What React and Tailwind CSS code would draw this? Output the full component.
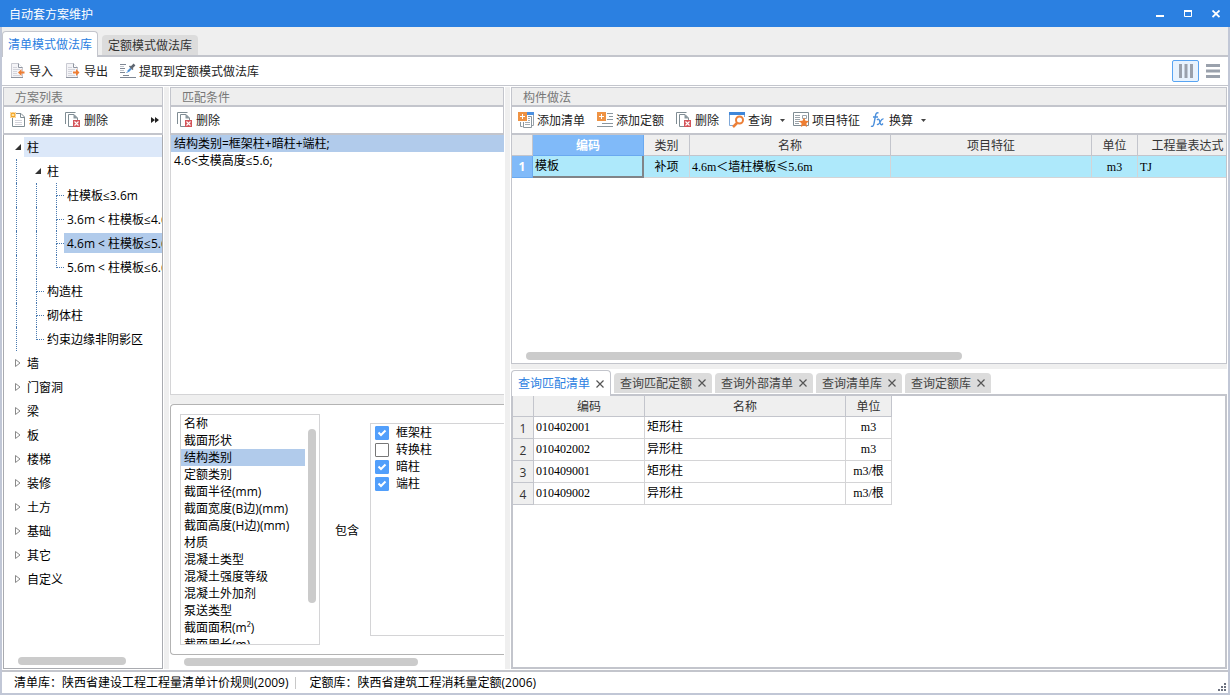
// App.jsx
import { useState } from "react";

const TREE = [
  { label: "柱", depth: 0, open: true, hover: true },
  { label: "柱", depth: 1, open: true },
  { label: "柱模板≤3.6m", depth: 2, leaf: true },
  { label: "3.6m < 柱模板≤4.6m", depth: 2, leaf: true },
  { label: "4.6m < 柱模板≤5.6m", depth: 2, leaf: true, selected: true },
  { label: "5.6m < 柱模板≤6.6m", depth: 2, leaf: true, last: true },
  { label: "构造柱", depth: 1, leaf: true },
  { label: "砌体柱", depth: 1, leaf: true },
  { label: "约束边缘非阴影区", depth: 1, leaf: true, last: true },
  { label: "墙", depth: 0 },
  { label: "门窗洞", depth: 0 },
  { label: "梁", depth: 0 },
  { label: "板", depth: 0 },
  { label: "楼梯", depth: 0 },
  { label: "装修", depth: 0 },
  { label: "土方", depth: 0 },
  { label: "基础", depth: 0 },
  { label: "其它", depth: 0 },
  { label: "自定义", depth: 0 },
];

const CONDITIONS = ["结构类别=框架柱+暗柱+端柱;", "4.6<支模高度≤5.6;"];

const ATTRIBUTES = [
  "名称",
  "截面形状",
  "结构类别",
  "定额类别",
  "截面半径(mm)",
  "截面宽度(B边)(mm)",
  "截面高度(H边)(mm)",
  "材质",
  "混凝土类型",
  "混凝土强度等级",
  "混凝土外加剂",
  "泵送类型",
  "截面面积(m²)",
  "截面周长(m)",
];

const COLUMN_TYPES = ["框架柱", "转换柱", "暗柱", "端柱"];

const QUERY_TABS = ["查询匹配清单", "查询匹配定额", "查询外部清单", "查询清单库", "查询定额库"];

const BILL_ROWS = [
  ["010402001", "矩形柱", "m3"],
  ["010402002", "异形柱", "m3"],
  ["010409001", "矩形柱", "m3/根"],
  ["010409002", "异形柱", "m3/根"],
];

/* ---------- icons ---------- */

function Icon({ children }) {
  return (
    <svg width="16" height="16" viewBox="0 0 16 16" fill="none" className="shrink-0" aria-hidden="true">
      {children}
    </svg>
  );
}

function DocArrow({ out = false }) {
  return (
    <Icon>
      <path d="M1.5.5h7l4 4v10h-11z" fill="#f4f4f7" stroke="#c9cad2" />
      <path d="M8.5.5v4h4" fill="#fff" stroke="#8f95a0" />
      <path d="M3 4.5h4M3 6.5h7M3 8.5h4M3 10.5h4M3 12.5h7" stroke="#d3d4db" />
      <path d="M1 14.5h12" stroke="#8f95a0" />
      {out ? (
        <path d="M14.5 9.5 11 6v2.500H8v2h3V13z" fill="#ee7d32" />
      ) : (
        <path d="M8 9.5 11.500 6v2.500h3v2h-3V13z" fill="#ee7d32" />
      )}
    </Icon>
  );
}

function ExtractIcon() {
  return (
    <Icon>
      <path d="M0 1.500h6M0 5.500h5M0 9.500h5M0 14.500h16M3 12.500h6" stroke="#7f8794" />
      <path d="M0 3.500h4M0 7.500h4" stroke="#c4c8cf" />
      <path d="M8 8.500 11 5.500" stroke="#4a90d9" strokeWidth="2" />
      <path d="M6.500 10 8.500 8" stroke="#4a90d9" />
      <path d="M9.500 3 13 6.500" stroke="#5d656f" strokeWidth="1.500" />
      <path d="M11.500 4.500 14.500 1.500" stroke="#5d656f" strokeWidth="2.500" />
    </Icon>
  );
}

function NewIcon() {
  return (
    <Icon>
      <path d="M6 1.500h5l3.500 3.500v9.500h-12V6" fill="#fff" stroke="#7f8c93" />
      <path d="M10.500 1.500v4h4" stroke="#7f8c93" />
      <path d="M5 8.500h7M5 10.500h7M5 12.500h7" stroke="#d3d3da" />
      <path d="M.500.500l5 5M5.500.500l-5 5M3 0v6M0 3h6" stroke="#f5a623" strokeWidth="1.100" />
      <circle cx="3" cy="3" r="1" fill="#fff3cf" />
    </Icon>
  );
}

function DeleteIcon() {
  return (
    <Icon>
      <path d="M.500 12V.500h10" stroke="#7f8c93" />
      <path d="M8 14.500H3.500v-12H9l3.500 3.500v2.500" fill="#fff" stroke="#7f8c93" />
      <path d="M8.500 2v4.500H13z" fill="#8b979e" />
      <rect x="8" y="8" width="7" height="7" fill="#d4545a" />
      <path d="m9.500 9.500 4 4m0-4-4 4" stroke="#fff" strokeWidth="1.100" />
    </Icon>
  );
}

function AddListIcon() {
  return (
    <Icon>
      <path d="M15.500 1v12.500h-2" stroke="#9aa3aa" />
      <path d="M9 1.500h7" stroke="#4b90e0" strokeWidth="3" />
      <path d="M2.500 10v4.500h2M5.500 10v5.500h8V4.500H10" stroke="#8b979e" />
      <path d="M10 6.500h2M10 8.500h2M7 10.500h5M7 12.500h5" stroke="#a5adb3" />
      <rect width="9" height="9" fill="#ef9344" />
      <path d="M4.500 2v5M2 4.500h5" stroke="#fff" />
    </Icon>
  );
}

function AddQuotaIcon() {
  return (
    <Icon>
      <path d="M10 1.500h6M12 4.500h4M10 7.500h6M5 11.500h11M0 14.500h16" stroke="#8b979e" />
      <rect width="9" height="9" fill="#ef9344" />
      <path d="M4.500 2v5M2 4.500h5" stroke="#fff" />
    </Icon>
  );
}

function QueryIcon() {
  return (
    <Icon>
      <path d="M.500 3v10.500H4M15.500 3v2" stroke="#7fa8d8" />
      <path d="M0 1.500h16" stroke="#3f86d8" strokeWidth="3" />
      <circle cx="10.500" cy="8" r="3.500" fill="#fff" stroke="#ec7f37" strokeWidth="2" />
      <path d="m8 11-4 4" stroke="#ec7f37" strokeWidth="2.500" />
    </Icon>
  );
}

function FeatureIcon() {
  return (
    <Icon>
      <path d="M.500.500h15v13H.500z" fill="#fff" stroke="#7f8c93" />
      <path d="M2 3.500h5M2 5.500h5M2 7.500h5M2 9.500h5M2 11.500h4" stroke="#9aa3aa" />
      <path d="M9.500 3.500h4v3h-4z" stroke="#9aa3aa" />
      <path d="m11 5.500 1.500 3.200 3.500.4-2.600 2.300.7 3.600-3.100-1.800L7.900 15l.7-3.600L6 9.100l3.500-.4z" fill="#ee7d32" />
    </Icon>
  );
}

function FxIcon() {
  return (
    <Icon>
      <path
        d="M8.500 1.200C7 .2 6 1.200 5.600 3.200L4 11.500C3.600 14 2.600 15 1 14M3 5h5"
        stroke="#4a8fdc"
        strokeWidth="1.400"
      />
      <path d="M7 8c2-2 2.500 0 3 2.500s1.500 3 3 1M13.500 7c-2-.5-3 2.500-4 4s-1.700 1.800-2.600 1.200" stroke="#4a8fdc" strokeWidth="1.300" />
    </Icon>
  );
}

function CloseMark() {
  return (
    <svg width="8" height="8" viewBox="0 0 8 8" aria-hidden="true">
      <path d="m.5.5 7 7m0-7-7 7" stroke="#555" strokeWidth="1.200" />
    </svg>
  );
}

function Caret() {
  return (
    <svg width="5" height="3" viewBox="0 0 5 3" className="ml-[5px]" aria-hidden="true">
      <path d="M0 0h5L2.500 3z" fill="#444" />
    </svg>
  );
}

/* ---------- shared pieces ---------- */

function ToolButton({ icon, label, menu = false }) {
  return (
    <button
      type="button"
      className={`flex h-[22px] shrink-0 items-center gap-[3px] rounded-sm text-[#222] hover:bg-[#eaf3fe] ${
        menu ? "pl-1 pr-px" : "pl-1.5 pr-[5px]"
      }`}
    >
      {icon}
      <span className="pt-0.5">{label}</span>
      {menu && <Caret />}
    </button>
  );
}

function PanelTitle({ children }) {
  return (
    <h2 className="h-5 shrink-0 border border-b-2 border-[#c3c5cc] bg-[#eeeeee] pl-[11px] leading-5 text-[#777]">
      {children}
    </h2>
  );
}

function PanelTools({ children }) {
  return (
    <div className="flex h-[28px] shrink-0 items-center gap-px border-x border-b-2 border-[#c3c5cc] bg-white">
      {children}
    </div>
  );
}

function Gutter() {
  return <div className="mx-px w-[5px] shrink-0 bg-[#efefef]" />;
}

/* ---------- plan tree ---------- */

function TreeMark({ node }) {
  if (node.leaf) {
    return (
      <span className="flex h-6 w-2 shrink-0 flex-col">
        <span className="h-[13px] border-b border-l border-dotted border-[#4a7ab0]" />
        {!node.last && <span className="grow border-l border-dotted border-[#4a7ab0]" />}
      </span>
    );
  }
  return (
    <span className="flex w-2 shrink-0">
      <svg width="6" height="8" viewBox="0 0 6 8" className="-ml-px" overflow="visible" aria-hidden="true">
        {node.open ? (
          <path d="M6 1v6H0z" fill="#333" />
        ) : (
          <path d="M.5.5v7L5 4z" fill="#fff" stroke="#8a8a8a" />
        )}
      </svg>
    </span>
  );
}

function TreeRow({ node }) {
  return (
    <li className="flex h-6 items-center pl-3">
      {Array.from({ length: node.depth }, (_, i) => (
        <span key={i} className="h-6 w-5 shrink-0 border-l border-dotted border-[#4a7ab0]" />
      ))}
      <TreeMark node={node} />
      <button
        type="button"
        className={`h-5 min-w-0 grow overflow-hidden whitespace-nowrap pl-[3px] pt-0.5 text-left leading-[18px] ${
          node.selected ? "bg-[#b1cbeb]" : node.hover ? "bg-[#dce8f9]" : ""
        }`}
      >
        {node.label}
      </button>
    </li>
  );
}

function PlanPanel() {
  return (
    <section className="flex w-40 shrink-0 flex-col">
      <PanelTitle>方案列表</PanelTitle>
      <PanelTools>
        <ToolButton icon={<NewIcon />} label="新建" />
        <ToolButton icon={<DeleteIcon />} label="删除" />
        <button type="button" aria-label="更多" className="ml-auto mr-[3px]">
          <svg width="8" height="6" viewBox="0 0 8 6" aria-hidden="true">
            <path d="M0 0v6l4-3zM4 0v6l4-3z" fill="#222" />
          </svg>
        </button>
      </PanelTools>
      <div className="flex min-h-0 grow flex-col border border-t-0 border-[#a9abb0] bg-white">
        <ul className="min-h-0 grow overflow-hidden">
          {TREE.map((node) => (
            <TreeRow key={`${node.depth}-${node.label}`} node={node} />
          ))}
        </ul>
        <div className="mb-[3px] ml-3.5 h-2 w-[108px] shrink-0 rounded-full bg-[#cbcbcb]" />
      </div>
    </section>
  );
}

/* ---------- match conditions ---------- */

function ConditionPanel() {
  const [attribute, setAttribute] = useState("结构类别");
  const [checked, setChecked] = useState(["框架柱", "暗柱", "端柱"]);

  const toggle = (type) =>
    setChecked((prev) => (prev.includes(type) ? prev.filter((t) => t !== type) : [...prev, type]));

  return (
    <section className="flex w-[334px] shrink-0 flex-col">
      <PanelTitle>匹配条件</PanelTitle>
      <PanelTools>
        <ToolButton icon={<DeleteIcon />} label="删除" />
      </PanelTools>
      <ul className="min-h-0 grow border-b border-l border-[#d4d4d6]">
        {CONDITIONS.map((text, i) => (
          <li key={text} className={`h-[17px] pl-[3px] leading-[17px] ${i === 0 ? "bg-[#b1cbeb]" : ""}`}>
            {text}
          </li>
        ))}
      </ul>
      <div className="h-[9px] shrink-0 bg-[#efefef]" />
      <div className="flex h-[251px] shrink-0 items-center rounded-l-sm border border-r-0 border-[#b3b3b3] pl-[9px]">
        <div className="flex h-[231px] w-[140px] shrink-0 border border-[#d4d4d6]">
          <ul className="w-[124px] overflow-hidden">
            {ATTRIBUTES.map((name) => (
              <li key={name}>
                <button
                  type="button"
                  onClick={() => setAttribute(name)}
                  className={`block h-[17px] w-full whitespace-nowrap pl-[3px] text-left leading-[17px] ${
                    name === attribute ? "bg-[#b1cbeb]" : ""
                  }`}
                >
                  {name}
                </button>
              </li>
            ))}
          </ul>
          <div className="ml-[3px] mt-3.5 h-[174px] w-2 rounded-full bg-[#cbcbcb]" />
        </div>
        <span className="w-[50px] shrink-0 pl-[15px] pt-0.5 whitespace-nowrap">包含</span>
        <div className="h-[213px] grow border border-r-0 border-[#d4d4d6] pl-1">
          {COLUMN_TYPES.map((type) => (
            <label key={type} className="flex h-[17px] items-center gap-[7px]">
              <span className="grid size-3.5">
                <input
                  type="checkbox"
                  checked={checked.includes(type)}
                  onChange={() => toggle(type)}
                  className="col-start-1 row-start-1 size-3.5 appearance-none rounded-[1px] border border-[#777] bg-white peer checked:border-[#529ffb] checked:bg-[#529ffb]"
                />
                <svg
                  viewBox="0 0 14 14"
                  className="pointer-events-none invisible col-start-1 row-start-1 size-3.5 peer-checked:visible"
                  aria-hidden="true"
                >
                  <path d="m3.500 6.500 2.500 2.500 4.500-4.500" fill="none" stroke="#fff" strokeWidth="2" />
                </svg>
              </span>
              {type}
            </label>
          ))}
        </div>
      </div>
      <div className="flex h-3.5 shrink-0 items-center pl-3.5">
        <div className="h-2 w-[234px] rounded-full bg-[#cbcbcb]" />
      </div>
    </section>
  );
}

/* ---------- component practices ---------- */

const HEAD = "h-[21px] border-b border-r border-[#c3c5cc] bg-[#efefef] p-0 pt-0.5 text-center font-normal text-[#333]";
const CELL = "h-[22px] border-b border-r border-[#d4d4d6] p-0 font-['Liberation_Serif','Noto_Sans_CJK_SC',serif] leading-4";

function PracticeTable() {
  return (
    <table className="w-[726px] table-fixed border-separate border-spacing-0 whitespace-nowrap">
      <colgroup>
        <col className="w-[21px]" />
        <col className="w-[111px]" />
        <col className="w-[46px]" />
        <col className="w-[201px]" />
        <col className="w-[201px]" />
        <col className="w-[46px]" />
        <col className="w-[100px]" />
      </colgroup>
      <thead>
        <tr>
          <th className={HEAD} aria-label="序号" />
          <th className="h-[21px] border-b border-r border-[#6aa9f0] bg-[#80baf9] p-0 pt-0.5 text-center font-bold text-white">
            编码
          </th>
          <th className={HEAD}>类别</th>
          <th className={HEAD}>名称</th>
          <th className={HEAD}>项目特征</th>
          <th className={HEAD}>单位</th>
          <th className={HEAD}>工程量表达式</th>
        </tr>
      </thead>
      <tbody className="bg-[#aee9fb]">
        <tr>
          <th className="h-[22px] border-b border-r border-[#6aa9f0] bg-[#80baf9] p-0 text-center font-bold text-white">
            1
          </th>
          <td className="h-[22px] border-b-2 border-r-2 border-[#808488] p-0 pl-0.5 font-['Liberation_Serif','Noto_Sans_CJK_SC',serif] leading-4">
            模板
          </td>
          <td className={`${CELL} text-center`}>补项</td>
          <td className={`${CELL} pl-0.5`}>
            4.6m＜墙柱模板<span className="font-['Noto_Sans_CJK_SC',sans-serif]">≤</span>5.6m
          </td>
          <td className={CELL} />
          <td className={`${CELL} text-center`}>m3</td>
          <td className={`${CELL} pl-0.5`}>TJ</td>
        </tr>
      </tbody>
    </table>
  );
}

function BillTable() {
  return (
    <table className="w-[379px] table-fixed border-separate border-spacing-0 whitespace-nowrap">
      <colgroup>
        <col className="w-[21px]" />
        <col className="w-[111px]" />
        <col className="w-[201px]" />
        <col className="w-[46px]" />
      </colgroup>
      <thead>
        <tr>
          <th className={HEAD} aria-label="序号" />
          <th className={HEAD}>编码</th>
          <th className={HEAD}>名称</th>
          <th className={HEAD}>单位</th>
        </tr>
      </thead>
      <tbody>
        {BILL_ROWS.map(([code, name, unit], i) => (
          <tr key={code}>
            <th className="h-[22px] border-b border-r border-[#c3c5cc] bg-[#efefef] p-0 pt-0.5 text-center font-normal text-[#333]">
              {i + 1}
            </th>
            <td className={`${CELL} pb-0.5 pl-0.5`}>{code}</td>
            <td className={`${CELL} pb-0.5 pl-0.5`}>{name}</td>
            <td className={`${CELL} pb-0.5 text-center`}>{unit}</td>
          </tr>
        ))}
      </tbody>
    </table>
  );
}

function PracticePanel() {
  const [tab, setTab] = useState(QUERY_TABS[0]);

  return (
    <section className="flex min-w-0 grow flex-col">
      <PanelTitle>构件做法</PanelTitle>
      <PanelTools>
        <ToolButton icon={<AddListIcon />} label="添加清单" />
        <ToolButton icon={<AddQuotaIcon />} label="添加定额" />
        <ToolButton icon={<DeleteIcon />} label="删除" />
        <ToolButton icon={<QueryIcon />} label="查询" menu />
        <ToolButton icon={<FeatureIcon />} label="项目特征" />
        <ToolButton icon={<FxIcon />} label="换算" menu />
      </PanelTools>
      <div className="flex h-[229px] shrink-0 flex-col overflow-hidden border border-t-0 border-[#c3c5cc]">
        <PracticeTable />
        <div className="mb-[3px] ml-3.5 mt-auto h-2 w-[436px] rounded-full bg-[#cbcbcb]" />
      </div>
      <div className="h-[5px] shrink-0 bg-[#efefef]" />

      <div className="flex h-[27px] shrink-0 items-end gap-[3px] border-b-2 border-[#c3c5cc]">
        {QUERY_TABS.map((name) => (
          <div
            key={name}
            className={
              name === tab
                ? "-mb-0.5 flex h-[26px] items-center gap-1.5 rounded-t-sm border border-b-0 border-[#c3c5cc] bg-white px-1.5 text-[#2b80e1]"
                : "mb-px flex h-5 items-center gap-1.5 rounded-t-sm bg-[#dcdcdc] px-1.5 text-[#444]"
            }
          >
            <button
              type="button"
              onClick={() => setTab(name)}
              className={name === tab ? "whitespace-nowrap" : "whitespace-nowrap pt-0.5"}
            >
              {name}
            </button>
            <button type="button" aria-label={`关闭${name}`}>
              <CloseMark />
            </button>
          </div>
        ))}
      </div>
      <div className="min-h-0 grow overflow-hidden border-2 border-t-0 border-[#c3c5cc]">
        <BillTable />
      </div>
    </section>
  );
}

/* ---------- window ---------- */

function TitleBar() {
  return (
    <header className="flex h-[27px] shrink-0 items-center justify-between bg-[#2b80e1] pl-[9px] pr-2.5 text-white">
      <h1 className="pt-0.5">自动套方案维护</h1>
      <div className="flex items-center gap-5">
        <button type="button" aria-label="最小化">
          <svg width="8" height="8" viewBox="0 0 8 8" aria-hidden="true">
            <path d="M0 6h8" stroke="#fff" strokeWidth="2" />
          </svg>
        </button>
        <button type="button" aria-label="最大化">
          <svg width="8" height="8" viewBox="0 0 8 8" aria-hidden="true">
            <path d="M.5 1v5.500h7V1" fill="none" stroke="#fff" />
            <path d="M0 1h8" stroke="#fff" strokeWidth="2" />
          </svg>
        </button>
        <button type="button" aria-label="关闭">
          <svg width="8" height="8" viewBox="0 0 8 8" aria-hidden="true">
            <path d="m.5.5 7 6.500m0-6.500-7 6.500" stroke="#fff" strokeWidth="1.800" />
          </svg>
        </button>
      </div>
    </header>
  );
}

function MainToolbar() {
  return (
    <div className="flex h-[29px] shrink-0 items-center gap-px border-b border-[#c3c5cc] bg-white pl-0.5 pr-[3px]">
      <ToolButton icon={<DocArrow />} label="导入" />
      <ToolButton icon={<DocArrow out />} label="导出" />
      <ToolButton icon={<ExtractIcon />} label="提取到定额模式做法库" />
      <button
        type="button"
        aria-label="纵向布局"
        className="ml-auto flex h-[22px] w-[27px] items-center justify-center rounded-xs border border-[#58a4f2] bg-[#e8f3fe]"
      >
        <svg width="14" height="14" viewBox="0 0 14 14" aria-hidden="true">
          <path d="M1.500 0v14M7 0v14M12.500 0v14" stroke="#9aa1ac" strokeWidth="3" />
        </svg>
      </button>
      <button type="button" aria-label="横向布局" className="flex h-[22px] w-[25px] items-center justify-center">
        <svg width="14" height="14" viewBox="0 0 14 14" aria-hidden="true">
          <path d="M0 1.500h14M0 7h14M0 12.500h14" stroke="#9aa1ac" strokeWidth="3" />
        </svg>
      </button>
    </div>
  );
}

export default function App() {
  return (
    <div className="flex h-screen flex-col overflow-hidden bg-white font-['Open_Sans','Noto_Sans_CJK_SC',sans-serif] text-[12px] leading-[18px] text-black">
      <TitleBar />
      <div className="flex min-h-0 grow flex-col border-2 border-t-0 border-[#c1c7d6]">
        <nav className="flex h-[30px] shrink-0 items-end gap-1 border-b-2 border-[#c3c5cc] bg-[#efefef]">
          <button
            type="button"
            className="-mb-0.5 h-[26px] rounded-t-sm border border-b-0 border-[#c3c5cc] bg-white px-[5px] text-[#2b80e1]"
          >
            清单模式做法库
          </button>
          <button type="button" className="h-5 rounded-t-sm bg-[#dcdcdc] px-1.5 pt-0.5 text-[#333]">
            定额模式做法库
          </button>
        </nav>
        <MainToolbar />

        <main className="flex min-h-0 grow px-px py-px">
          <PlanPanel />
          <Gutter />
          <ConditionPanel />
          <Gutter />
          <PracticePanel />
        </main>

        <footer className="flex h-[23px] shrink-0 items-center border-t-2 border-[#c3c5cc] bg-white pl-3">
          <span>清单库：陕西省建设工程工程量清单计价规则(2009)</span>
          <span className="ml-1.5 h-3 border-l border-[#c8c8c8]" />
          <span className="ml-3.5">定额库：陕西省建筑工程消耗量定额(2006)</span>
          <svg width="8" height="8" viewBox="0 0 8 8" className="ml-auto mr-0.5 mt-2" aria-hidden="true">
            <path
              d="M6 0h2v2H6zM3 3h2v2H3zM6 3h2v2H6zM0 6h2v2H0zM3 6h2v2H3zM6 6h2v2H6z"
              fill="#6d7280"
            />
          </svg>
        </footer>
      </div>
    </div>
  );
}
